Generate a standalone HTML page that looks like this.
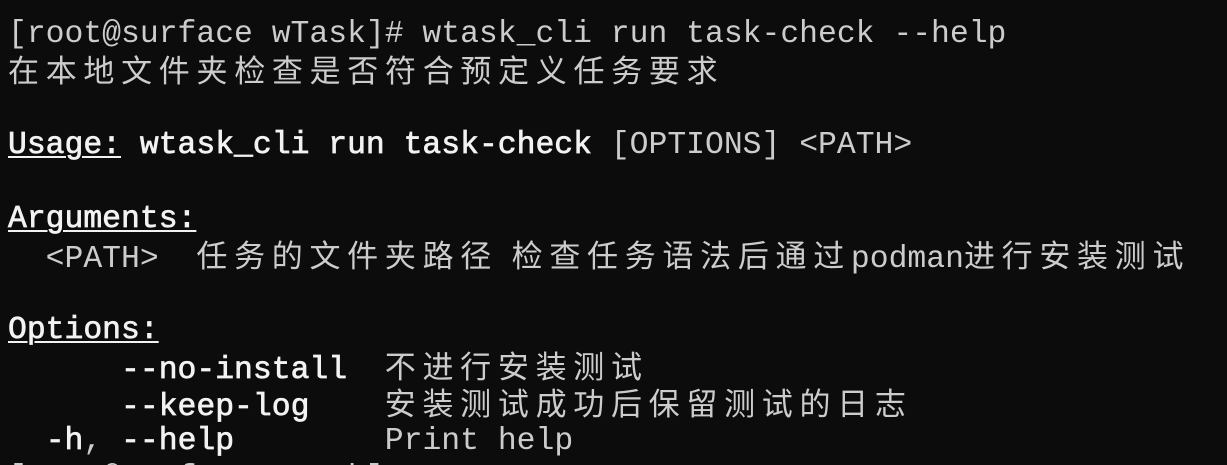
<!DOCTYPE html>
<html><head><meta charset="utf-8"><style>
html,body{margin:0;padding:0;background:#0c0c0c;width:1227px;height:465px;overflow:hidden}
.t{padding:16px 0 0 8px;font-family:"Liberation Mono","DejaVu Sans Mono",monospace;font-size:31.4px;color:#cccccc}
.t div{height:37px;line-height:37px;overflow:visible;white-space:pre}
.c{font-family:"Noto Sans CJK SC",sans-serif;font-size:31px;letter-spacing:6.7px;line-height:1}
b{color:#f2f2f2;font-weight:normal;-webkit-text-stroke:0.7px #f2f2f2}
u{text-decoration:underline;text-underline-offset:3px;text-decoration-thickness:2px}
</style></head><body><div class="t"><div>[root@surface wTask]# wtask_cli run task-check --help</div><div><span class="c">在本地文件夹检查是否符合预定义任务要求</span></div><div> </div><div><b><u>Usage:</u></b> <b>wtask_cli run task-check</b> [OPTIONS] &lt;PATH&gt;</div><div> </div><div><b><u>Arguments:</u></b></div><div>  &lt;PATH&gt;  <span class="c">任务的文件夹路径 检查任务语法后通过</span>podman<span class="c">进行安装测试</span></div><div> </div><div><b><u>Options:</u></b></div><div>      <b>--no-install</b>  <span class="c">不进行安装测试</span></div><div>      <b>--keep-log</b>    <span class="c">安装测试成功后保留测试的日志</span></div><div>  <b>-h</b>, <b>--help</b>        Print help</div><div>[root@surface wTask]# </div></div></body></html>
